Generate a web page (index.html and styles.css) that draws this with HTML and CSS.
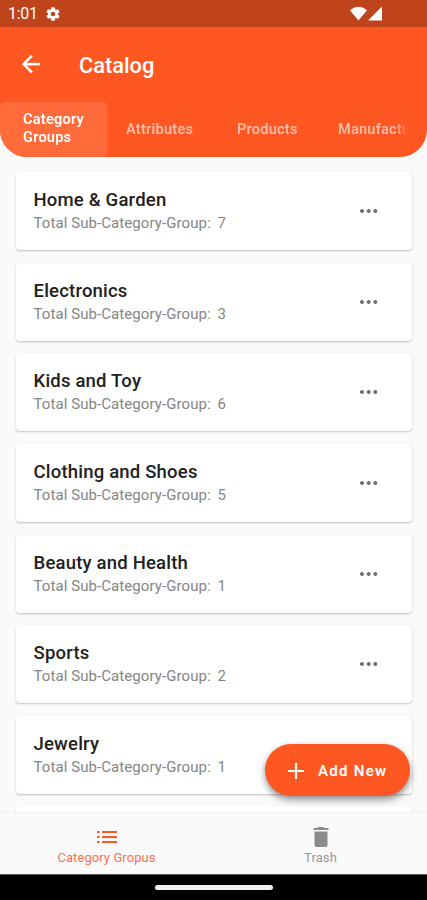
FILE: index.html
```html
<!DOCTYPE html>
<html lang="en">
<head>
<meta charset="utf-8">
<title>Catalog</title>
<link rel="stylesheet" href="styles.css">
</head>
<body>
<div class="screen">
  <div class="status">
    <span class="time">1:01</span>
    <svg class="gear" viewBox="2 2 20 20"><path fill="#fff" fill-rule="evenodd" d="M19.14 12.94c.04-.3.06-.61.06-.94s-.02-.64-.07-.94l2.03-1.58a.49.49 0 0 0 .12-.61l-1.92-3.32a.49.49 0 0 0-.59-.22l-2.39.96a7 7 0 0 0-1.62-.94l-.36-2.54a.48.48 0 0 0-.48-.41h-3.84a.48.48 0 0 0-.47.41l-.36 2.54a7.400 7.400 0 0 0-1.620.940l-2.390-.960a.48.48 0 0 0-.590.220L2.740 8.870a.48.48 0 0 0 .120.610l2.030 1.580a7 7 0 0 0 0 1.880l-2.030 1.580a.49.49 0 0 0-.120.610l1.920 3.320c.120.220.370.290.590.220l2.390-.960c.500.380 1.030.700 1.620.940l.360 2.540c.050.240.240.410.480.410h3.840c.240 0 .440-.170.470-.410l.360-2.540a7 7 0 0 0 1.620-.940l2.390.960c.220.080.470 0 .590-.220l1.920-3.320a.48.48 0 0 0-.120-.610zM12 15.300a3.300 3.300 0 1 1 0-6.600 3.300 3.300 0 0 1 0 6.600z"/></svg>
    <svg class="signals" viewBox="0 0 33 15"><path fill="#fff" d="M0 4.200Q8.500-2.600 17 4.200L8.500 14.500zM32 .5V14.500H18z"/></svg>
  </div>
  <header class="header">
    <div class="titlebar">
      <svg class="back" viewBox="4 4 16 16"><path fill="#fff" stroke="#fff" stroke-width=".3" d="M20 11H7.830l5.590-5.590L12 4l-8 8 8 8 1.410-1.410L7.830 13H20z"/></svg>
      <h1>Catalog</h1>
    </div>
    <nav class="tabs">
      <span class="tab active">Category<br>Groups</span>
      <span class="tab attributes">Attributes</span>
      <span class="tab products">Products</span>
      <span class="tab manufacturers">Manufacturers</span>
    </nav>
  </header>
  <main class="list">
    <article class="card"><div><h2>Home &amp; Garden</h2><p>Total Sub-Category-Group: <b>7</b></p></div><i class="dots"></i></article>
    <article class="card"><div><h2>Electronics</h2><p>Total Sub-Category-Group: <b>3</b></p></div><i class="dots"></i></article>
    <article class="card"><div><h2>Kids and Toy</h2><p>Total Sub-Category-Group: <b>6</b></p></div><i class="dots"></i></article>
    <article class="card"><div><h2>Clothing and Shoes</h2><p>Total Sub-Category-Group: <b>5</b></p></div><i class="dots"></i></article>
    <article class="card"><div><h2>Beauty and Health</h2><p>Total Sub-Category-Group: <b>1</b></p></div><i class="dots"></i></article>
    <article class="card"><div><h2>Sports</h2><p>Total Sub-Category-Group: <b>2</b></p></div><i class="dots"></i></article>
    <article class="card"><div><h2>Jewelry</h2><p>Total Sub-Category-Group: <b>1</b></p></div></article>
    <article class="card"></article>
  </main>
  <button class="add"><svg viewBox="0 0 16 16"><path d="M8 0V16M0 8H16" stroke="#fff" stroke-width="2.200"/></svg><span>Add New</span></button>
  <nav class="bottom">
    <div class="item selected">
      <svg class="listicon" viewBox="0 0 20 12"><path fill="#ff5722" d="M0 0h2.500v2H0zM5 0h15v2H5zM0 5h2.500v2H0zM5 5h15v2H5zM0 10h2.500v2H0zM5 10h15v2H5z"/></svg>
      <span>Category Gropus</span>
    </div>
    <div class="item">
      <svg class="trash" viewBox="0 0 16 20"><path fill="#8b8b8b" d="M.5 1H4.500L5.500 0h5l1 1h4v2H.5zM1.500 4.500h13V18a2 2 0 0 1-2 2h-9a2 2 0 0 1-2-2z"/></svg>
      <span>Trash</span>
    </div>
  </nav>
  <div class="system"><i></i></div>
</div>
</body>
</html>
```
FILE: styles.css
```css
* { box-sizing: border-box; margin: 0; }
body { font-family: Roboto, "Liberation Sans", sans-serif; background: #fafafa; }
.screen { position: relative; width: 427px; height: 900px; display: flex; flex-direction: column; overflow: hidden; }
.status { height: 27px; flex: none; background: #bf431b; display: flex; align-items: center; padding: 0 44px 0 8px; color: #fff; }
.time { font-size: 16px; letter-spacing: -0.3px; width: 38px; line-height: 28px; padding-top: 1px; }
.gear { width: 14px; height: 14px; }
.signals { width: 33px; height: 15px; margin-left: auto; margin-top: -1px; }
.header { height: 130px; flex: none; background: #ff5722; border-radius: 0 0 27px 27px; overflow: hidden; color: #fff; }
.titlebar { height: 75px; display: flex; align-items: center; padding-left: 22px; }
.back { width: 18px; height: 18px; margin-right: 39px; margin-top: -1px; }
h1 { font-size: 21.8px; font-weight: 500; line-height: 28px; letter-spacing: 0; padding-top: 2px; }
.tabs { display: flex; height: 55px; width: 407px; overflow: hidden; font-size: 14.5px; font-weight: 600; line-height: 17.5px; -webkit-mask-image: linear-gradient(90deg, #000 395px, transparent 409px); }
.tab { flex: none; display: flex; align-items: center; color: #ffbba7; letter-spacing: .25px; }
.tab.active { display: block; width: 107px; padding: 9px 0 0 23px; color: #fff; background: #ff6b3b; border-radius: 5px; }
.attributes { width: 130px; padding-left: 19px; }
.products { width: 101px; }
.list { flex: 1; min-height: 0; overflow: hidden; padding: 15px 15px 0 16px; display: flex; flex-direction: column; gap: 12.65px; }
.card { flex: none; height: 78px; background: #fff; border-radius: 4px; box-shadow: 0 1px 2px #0000003d; display: flex; align-items: center; justify-content: space-between; padding: 0 34px 0 17.5px; }
.card > div { padding-top: 1px; }
h2 { font-size: 18.5px; font-weight: 500; line-height: 24px; letter-spacing: .2px; color: #212121; white-space: nowrap; }
.card p { font-size: 15px; line-height: 23px; color: #858585; letter-spacing: .08px; white-space: nowrap; }
.card b { font-weight: 400; margin-left: 3px; }
.dots { width: 18px; height: 4px; background: radial-gradient(circle at 2px 2px, #707070 1.600px, transparent 2.200px) 0 0 / 6.700px 4px; }
.add { position: absolute; left: 265px; top: 744px; width: 145px; height: 52px; border: 0; border-radius: 26px; background: #ff5722; color: #fff; box-shadow: 0 3px 6px #00000055, 0 5px 10px #00000025; display: flex; align-items: center; padding: 1px 0 0 23px; font: 600 15px Roboto, sans-serif; letter-spacing: 1.300px; }
.add svg { width: 16px; height: 16px; margin-right: 14px; }
.bottom { height: 62px; flex: none; background: #fafafa; border-top: 1px solid #efefef; display: flex; position: relative; }
.item { flex: 1; display: flex; flex-direction: column; align-items: center; justify-content: flex-end; padding-bottom: 8px; color: #999; font-size: 13px; line-height: 17px; letter-spacing: .08px; }
.item + .item { padding-left: 1px; }
.selected { color: #ff6f50; }
.listicon { width: 20px; height: 12px; margin-bottom: 6px; }
.trash { width: 16px; height: 20px; margin-bottom: 2px; }
.system { height: 26px; flex: none; background: #000; border-top: 1px solid #555; display: flex; justify-content: center; padding-top: 10px; }
.system i { width: 118px; height: 5px; border-radius: 3px; background: #f0f0f0; }
```
